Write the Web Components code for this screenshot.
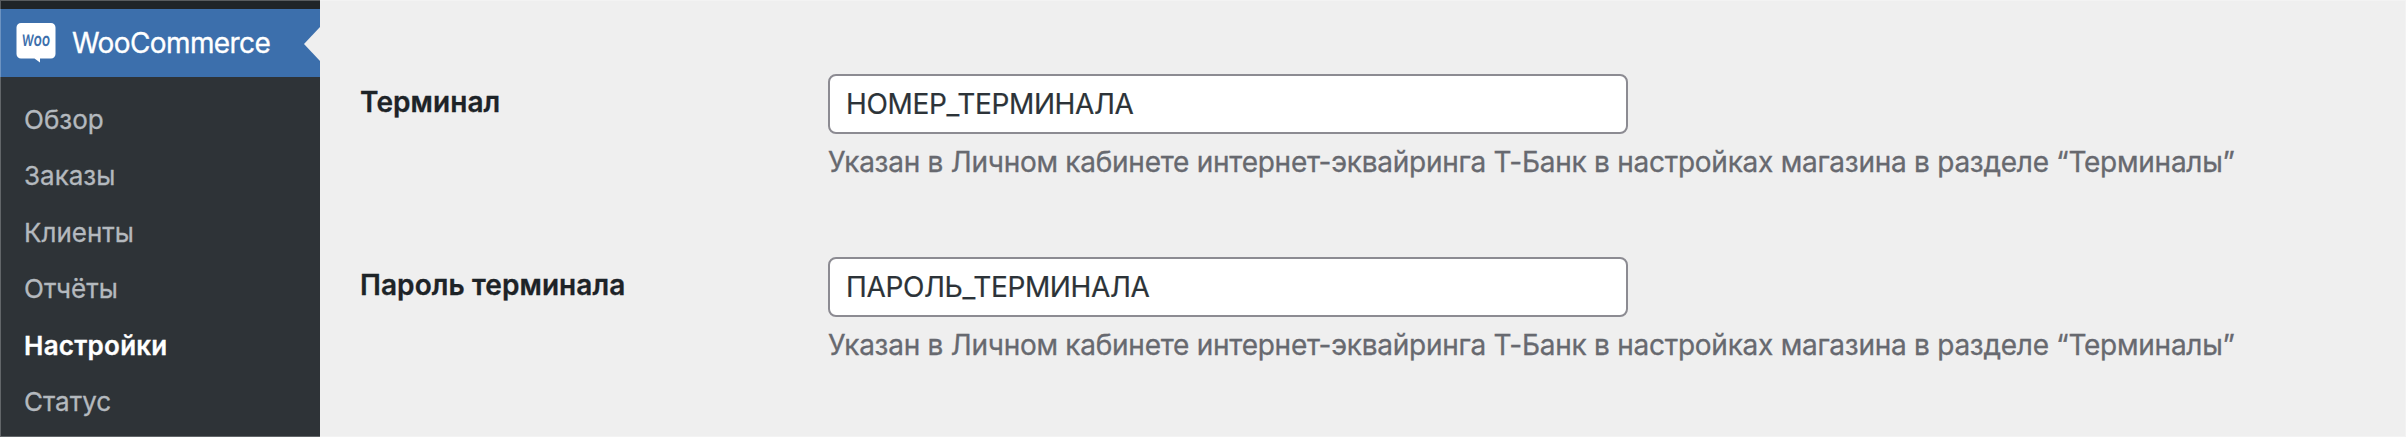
<!DOCTYPE html>
<html lang="ru">
<head>
<meta charset="utf-8">
<title>WooCommerce</title>
<style>
    html, body{
        margin:0;
        height:100%;
    }
    body{
        font-family:Inter, "Noto Sans", sans-serif;
        background:#efefef;
        overflow:hidden;
    }
</style>
</head>
<body>

<settings-page>
    <admin-menu slot="menu">
        <menu-head slot="head">WooCommerce</menu-head>
        <menu-item>Обзор</menu-item>
        <menu-item>Заказы</menu-item>
        <menu-item>Клиенты</menu-item>
        <menu-item>Отчёты</menu-item>
        <menu-item current>Настройки</menu-item>
        <menu-item>Статус</menu-item>
    </admin-menu>
    <setting-row value="НОМЕР_ТЕРМИНАЛА">
        <span slot="label">Терминал</span>
        Указан в Личном кабинете интернет-эквайринга Т-Банк в настройках магазина в разделе “Терминалы”
    </setting-row>
    <setting-row value="ПАРОЛЬ_ТЕРМИНАЛА">
        <span slot="label">Пароль терминала</span>
        Указан в Личном кабинете интернет-эквайринга Т-Банк в настройках магазина в разделе “Терминалы”
    </setting-row>
</settings-page>

<template id="pageTmpl">
    <style>
        :host{
            display:grid;
            grid-template-columns:320px 1fr;
            height:437px;
            position:relative;
        }
        main{
            display:flex;
            flex-direction:column;
            gap:75px;
            padding:74px 0 0 40px;
        }
        /* thin light frame over the whole page */
        :host::after{
            content:"";
            position:absolute;
            inset:0;
            border:1px solid rgba(255,255,255,.25);
            pointer-events:none;
        }
    </style>
    <slot name="menu"></slot>
    <main><slot></slot></main>
</template>

<template id="menuTmpl">
    <style>
        :host{
            display:flex;
            flex-direction:column;
            box-sizing:border-box;
            padding-top:9px;
            background:linear-gradient(#1f2428 9px, #2e3337 9px);
        }
        nav{
            display:flex;
            flex-direction:column;
            padding-top:15px;
        }
    </style>
    <slot name="head"></slot>
    <nav><slot></slot></nav>
</template>

<template id="headTmpl">
    <style>
        :host{
            display:flex;
            align-items:center;
            height:68px;
            padding-left:16px;
            background:#3c6fac;
            color:#fff;
            font-size:28px;
            line-height:36px;
            letter-spacing:-.6px;
            -webkit-text-stroke:.3px;
        }
        .icon{
            width:40px;
            height:40px;
            margin-right:16px;
            flex:none;
            overflow:visible;
        }
        .arrow{
            width:16px;
            height:34px;
            margin:2px 0 0 auto;
            background:#efefef;
            clip-path:polygon(100% 0, 100% 100%, 0 50%);
        }
    </style>
    <svg class="icon" viewBox="0 0 40 40">
        <path fill="#fff" d="M5 0H35A4.500 4.500 0 0 1 39.500 4.500V31A4.500 4.500 0 0 1 35 35.500H24V39.500L18.500 35.500H5A4.500 4.500 0 0 1 .5 31V4.500A4.500 4.500 0 0 1 5 0Z"/>
        <g fill="#3c6fac" font-weight="600" letter-spacing="0">
            <text x="5.500" y="23" font-size="16" textLength="28.500" lengthAdjust="spacingAndGlyphs" transform="skewX(-4) translate(1.500 0)">W<tspan font-size="18.500">oo</tspan></text>
        </g>
    </svg>
    <span><slot></slot></span>
    <i class="arrow"></i>
</template>

<template id="itemTmpl">
    <style>
        :host{
            display:block;
            padding:10px 24px;
            font-size:26px;
            line-height:36.4px;
            color:#b4b9be;
            -webkit-text-stroke:.3px;
        }
        :host([current]){
            color:#fff;
            font-weight:600;
            letter-spacing:.25px;
        }
    </style>
    <slot></slot>
</template>

<template id="rowTmpl">
    <style>
        :host{
            display:grid;
            grid-template-columns:468px 1fr;
            font-size:28px;
        }
        .label{
            padding-top:10px;
            line-height:36px;
            font-weight:600;
            letter-spacing:.08px;
            color:#1d2327;
            -webkit-text-stroke:.3px;
        }
        input{
            display:block;
            box-sizing:border-box;
            width:800px;
            height:60px;
            padding:0 16px;
            border:2px solid #8c8b92;
            border-radius:8px;
            background:#fff;
            font:inherit;
            letter-spacing:-.36px;
            color:#2c3338;
            -webkit-text-stroke:.2px;
        }
        p{
            margin:8px 0 0;
            line-height:40px;
            letter-spacing:-.26px;
            color:#67696f;
            white-space:nowrap;
            -webkit-text-stroke:.3px;
        }
    </style>
    <div class="label"><slot name="label"></slot></div>
    <div>
        <input type="text">
        <p><slot></slot></p>
    </div>
</template>

<script>
class TemplateElement extends HTMLElement{
    constructor(tmplId){
        super();
        let template = document.getElementById(tmplId);
        this.attachShadow({mode:'open'})
            .appendChild(template.content.cloneNode(true));
    }
}

class SettingsPage extends TemplateElement{
    constructor(){ super('pageTmpl'); }
}

class AdminMenu extends TemplateElement{
    constructor(){ super('menuTmpl'); }
}

class MenuHead extends TemplateElement{
    constructor(){ super('headTmpl'); }
}

class MenuItem extends TemplateElement{
    constructor(){ super('itemTmpl'); }
}

class SettingRow extends TemplateElement{
    constructor(){ super('rowTmpl'); }

    connectedCallback(){
        this.shadowRoot.querySelector('input').value = this.getAttribute('value') || '';
    }
}

customElements.define('settings-page', SettingsPage);
customElements.define('admin-menu', AdminMenu);
customElements.define('menu-head', MenuHead);
customElements.define('menu-item', MenuItem);
customElements.define('setting-row', SettingRow);
</script>
</body>
</html>
